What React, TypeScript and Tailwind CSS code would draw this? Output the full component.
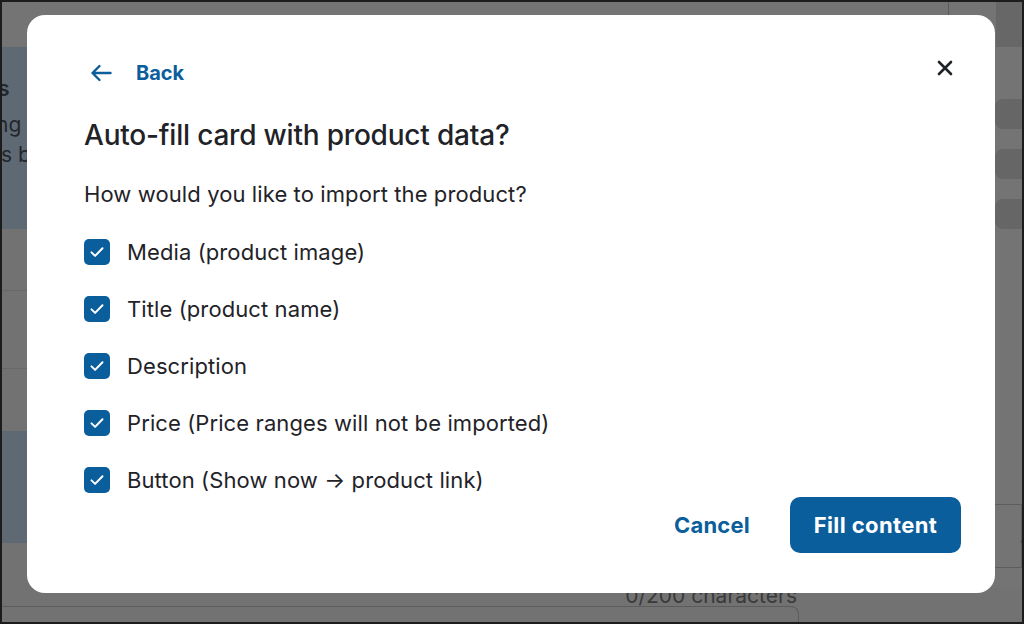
import React, { useState } from "react";

const BLUE = "#0b5e9c";

const options = [
  "Media (product image)",
  "Title (product name)",
  "Description",
  "Price (Price ranges will not be imported)",
  "Button (Show now \u2192 product link)",
];

function CheckBox({ checked, onToggle }: { checked: boolean; onToggle: () => void }) {
  return (
    <button
      type="button"
      onClick={onToggle}
      className={`flex h-[26px] w-[26px] shrink-0 items-center justify-center rounded-[5px] ${
        checked ? "bg-[#0b5e9c]" : "border-2 border-[#5f6368] bg-white"
      }`}
    >
      {checked && (
        <svg width="18" height="18" viewBox="0 0 18 18" fill="none">
          <path d="M3.5 9.4l3.6 3.5L14.5 5.3" stroke="white" strokeWidth="2" strokeLinecap="round" strokeLinejoin="round" />
        </svg>
      )}
    </button>
  );
}

// dimmed page behind the dialog
function Backdrop() {
  return (
    <div className="flex h-full w-full flex-col bg-[#727272]">
      <div className="flex h-[45px] shrink-0">
        <div className="flex-1 bg-[#747474]" />
        <div className="w-px bg-[#5a5a5a]" />
        <div className="w-[47px] bg-[#747474]" />
        <div className="w-[26px] bg-[#676767]" />
      </div>
      <div className="flex flex-1">
        <div className="flex w-[120px] flex-col">
          <div className="flex h-[182px] flex-col bg-[#5f6974] pt-[24px] text-[21px] leading-[36px] text-[#22272c]">
            <span className="-ml-[4px] font-semibold">s</span>
            <span className="-ml-[6px]">ng</span>
            <span className="-ml-[1px] -mt-[6px]">s by</span>
          </div>
          <div className="h-[62px] border-b border-[#686868]" />
          <div className="h-[78px] border-b border-[#686868]" />
          <div className="h-[62px]" />
          <div className="h-[112px] bg-[#5f6974]" />
          <div className="flex-1" />
        </div>
        <div className="flex-1" />
        <div className="flex w-[40px] flex-col border-l border-[#6a6a6a] bg-[#747474] pt-[52px]">
          <div className="ml-[12px] flex flex-col gap-[20px]">
            <div className="h-[30px] rounded-l-[8px] bg-[#666666]" />
            <div className="h-[30px] rounded-l-[8px] bg-[#666666]" />
            <div className="h-[30px] rounded-l-[8px] bg-[#666666]" />
          </div>
          <div className="flex-1" />
          <div className="mb-[20px] ml-[-20px] flex h-[64px] items-center rounded-l-[32px] border border-[#5e5e5e] pl-[56px] text-[18px] text-[#4a4a4a]">
            A
          </div>
        </div>
      </div>
      <div className="flex h-[34px] shrink-0">
        <div className="flex w-[797px] flex-col">
          <div className="flex h-[18px] items-end justify-end pr-[2px] text-[21px] leading-[21px] text-[#3a3a3a]">
            0/200 characters
          </div>
          <div className="flex-1 rounded-tr-[8px] border-r border-t border-[#5c5c5c]" />
        </div>
      </div>
    </div>
  );
}

export default function App() {
  const [checked, setChecked] = useState<boolean[]>(options.map(() => true));

  return (
    <div
      className="relative h-[624px] w-[1024px] overflow-hidden border-2 border-[#1c1c1c]"
      style={{ fontFamily: "Inter, 'Noto Sans', sans-serif" }}
    >
      <Backdrop />

      <div className="absolute left-[25px] top-[13px] flex h-[578px] w-[968px] flex-col rounded-[18px] bg-white pl-[57px] pr-[34px] pt-[44px] pb-[40px] text-[#1f2328]">
        <div className="flex h-[28px] items-center justify-between">
          <button type="button" className="flex h-[28px] items-center gap-[24px] pl-[6px] font-bold text-[20px]" style={{ color: BLUE }}>
            <svg width="22" height="18" viewBox="0 0 22 18" fill="none">
              <path d="M20.5 9H2.5M9.5 2L2.5 9l7 7" stroke={BLUE} strokeWidth="2.4" strokeLinecap="round" strokeLinejoin="round" />
            </svg>
            Back
          </button>
          <button type="button" className="-mt-[10px] mr-[2px] flex h-[28px] w-[28px] items-center justify-center">
            <svg width="16" height="16" viewBox="0 0 16 16" fill="none">
              <path d="M2 2l12 12M14 2L2 14" stroke="#1f2328" strokeWidth="2.6" strokeLinecap="round" />
            </svg>
          </button>
        </div>

        <h2 className="mt-[30px] text-[28px] font-medium leading-[36px] tracking-[-0.2px]">
          Auto-fill card with product data?
        </h2>

        <p className="mt-[27px] text-[22px] leading-[28px] tracking-[0.1px]">How would you like to import the product?</p>

        <div className="mt-[31px] flex flex-col gap-[31px]">
          {options.map((label, i) => (
            <label key={label} className="flex h-[26px] items-center gap-[17px] text-[22px] tracking-[0.1px]">
              <CheckBox
                checked={checked[i]}
                onToggle={() => setChecked((c) => c.map((v, j) => (j === i ? !v : v)))}
              />
              <span>{label}</span>
            </label>
          ))}
        </div>

        <div className="mt-auto flex items-center justify-end gap-[40px]">
          <button type="button" className="text-[22px] font-bold tracking-[0.2px]" style={{ color: BLUE }}>
            Cancel
          </button>
          <button
            type="button"
            className="h-[56px] w-[171px] rounded-[10px] bg-[#0b5e9c] text-[22px] font-bold tracking-[0.4px] text-white"
          >
            Fill content
          </button>
        </div>
      </div>
    </div>
  );
}
